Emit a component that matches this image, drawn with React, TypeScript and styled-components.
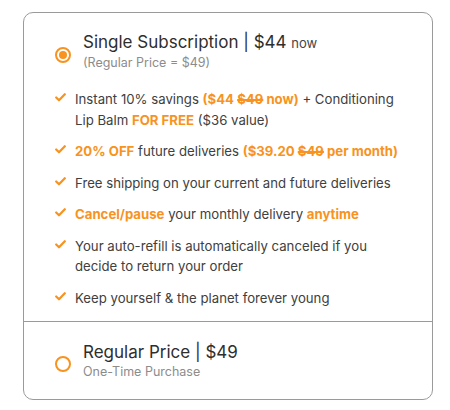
import React from "react";
import styled, { createGlobalStyle } from "styled-components";

const Global = createGlobalStyle`
  html, body { margin: 0; padding: 0; background: #fff; }
  body { font-family: Inter, "Noto Sans", sans-serif; color: #333; }
`;

const ORANGE = "#f7931e";

const Page = styled.div`
  padding: 12px 0 0 23px;
`;

const Card = styled.div`
  width: 408px;
  border: 1px solid #9a9a9a;
  border-radius: 10px;
  overflow: hidden;
`;

const Section = styled.div<{ $bottom?: boolean }>`
  padding: ${(p) => (p.$bottom ? "19px 20px 18px 31px" : "18px 20px 13px 31px")};
  & + & {
    border-top: 1px solid #9a9a9a;
  }
`;

const Header = styled.div`
  display: flex;
  align-items: center;
  gap: 12px;
`;

const Radio = styled.span<{ $checked?: boolean }>`
  box-sizing: border-box;
  width: 16px;
  height: 16px;
  border-radius: 50%;
  border: 2px solid ${ORANGE};
  display: flex;
  align-items: center;
  justify-content: center;
  margin-top: 6px;
  flex: none;
  &::after {
    content: "";
    width: 8px;
    height: 8px;
    border-radius: 50%;
    background: ${(p) => (p.$checked ? ORANGE : "transparent")};
  }
`;

const Titles = styled.div`
  display: flex;
  flex-direction: column;
`;

const Title = styled.div`
  font-size: 17px;
  line-height: 22px;
  color: #2e2e2e;
`;

const Small = styled.span`
  font-size: 13px;
  color: #444;
`;

const Sub = styled.div`
  font-size: 12.5px;
  line-height: 18px;
  color: #8c8c8c;
`;

const List = styled.ul`
  list-style: none;
  margin: 17px 0 0 0;
  padding: 0;
  display: flex;
  flex-direction: column;
  gap: 11px;
`;

const Item = styled.li`
  display: flex;
  gap: 9px;
  font-size: 13.2px;
  line-height: 20.5px;
  color: #404040;
`;

const Check = styled.svg`
  flex: none;
  width: 11px;
  height: 9px;
  margin-top: 4px;
`;

const Hi = styled.b`
  color: ${ORANGE};
  font-weight: 700;
`;

const Strike = styled.s`
  text-decoration-thickness: 1.5px;
`;

const Tick = () => (
  <Check viewBox="0 0 11 9">
    <polyline
      points="1.2,4.5 4,7.3 9.8,1.2"
      fill="none"
      stroke={ORANGE}
      strokeWidth="2.2"
      strokeLinecap="round"
      strokeLinejoin="round"
    />
  </Check>
);

export default function App() {
  return (
    <>
      <Global />
      <Page>
        <Card>
          <Section>
            <Header>
              <Radio $checked />
              <Titles>
                <Title>
                  Single Subscription | $44 <Small>now</Small>
                </Title>
                <Sub>(Regular Price = $49)</Sub>
              </Titles>
            </Header>
            <List>
              <Item>
                <Tick />
                <span>
                  Instant 10% savings{" "}
                  <Hi>
                    ($44 <Strike>$49</Strike> now)
                  </Hi>{" "}
                  + Conditioning Lip Balm <Hi>FOR FREE</Hi> ($36 value)
                </span>
              </Item>
              <Item>
                <Tick />
                <span>
                  <Hi>20% OFF</Hi> future deliveries{" "}
                  <Hi>
                    ($39.20 <Strike>$49</Strike> per month)
                  </Hi>
                </span>
              </Item>
              <Item>
                <Tick />
                <span>Free shipping on your current and future deliveries</span>
              </Item>
              <Item>
                <Tick />
                <span>
                  <Hi>Cancel/pause</Hi> your monthly delivery <Hi>anytime</Hi>
                </span>
              </Item>
              <Item>
                <Tick />
                <span>
                  Your auto-refill is automatically canceled if you decide to
                  return your order
                </span>
              </Item>
              <Item>
                <Tick />
                <span>Keep yourself &amp; the planet forever young</span>
              </Item>
            </List>
          </Section>
          <Section $bottom>
            <Header>
              <Radio />
              <Titles>
                <Title>Regular Price | $49</Title>
                <Sub>One-Time Purchase</Sub>
              </Titles>
            </Header>
          </Section>
        </Card>
      </Page>
    </>
  );
}
